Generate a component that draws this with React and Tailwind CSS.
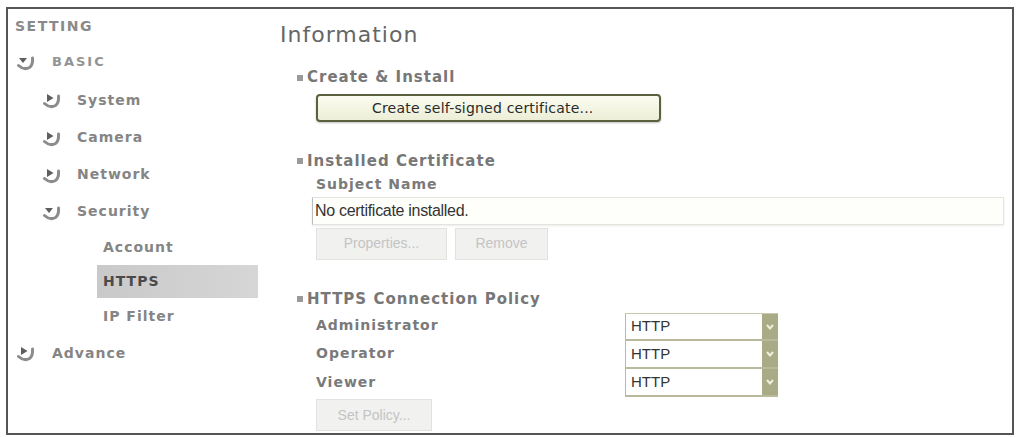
import React from 'react';

const verdana = { fontFamily: '"DejaVu Sans", Verdana, sans-serif' };
const arial = { fontFamily: '"Liberation Sans", Arial, sans-serif' };

function NavIcon({ open }) {
  return (
    <svg width="20" height="18" viewBox="0 0 20 18" className="shrink-0">
      <path d="M2.5 12.5 Q8 17.5 13.5 14.5 Q17 12 16.5 5" fill="none" stroke="#8c8c8c" strokeWidth="3" strokeLinecap="round" />
      {open ? (
        <polygon points="3,5 11,5 7,10" fill="#5e5e5e" />
      ) : (
        <polygon points="5,3 11.5,7 5,11" fill="#5e5e5e" />
      )}
    </svg>
  );
}

function SideItem({ icon, open, label, indent, h, active, small }) {
  return (
    <div className="flex items-center" style={{ height: h }}>
      {icon && (
        <div className={indent ? 'pl-[34px] pr-[15px]' : 'pl-[8px] pr-[16px]'}>
          <NavIcon open={open} />
        </div>
      )}
      {!icon && (
        <div
          className={`ml-[89px] flex items-center h-full w-[161px] pl-[6px] ${active ? 'bg-gradient-to-r from-[#c9c9c9] to-[#d6d6d6]' : ''}`}
        >
          <span className={`font-bold text-[14px] tracking-[1px] ${active ? 'text-[#4a4a4a]' : 'text-[#858585]'}`}>{label}</span>
        </div>
      )}
      {icon && (
        <span className={`font-bold ${small ? 'text-[13px] tracking-[2px] text-[#939393]' : 'text-[14px] tracking-[1px] text-[#858585]'}`}>{label}</span>
      )}
    </div>
  );
}

function Heading({ children }) {
  return (
    <div className="flex items-center pl-[27px]">
      <span className="w-[6px] h-[6px] bg-[#9a9a9a] mr-[4px]" />
      <span className="font-bold text-[15px] tracking-[1px] text-[#777]">{children}</span>
    </div>
  );
}

function Label({ children }) {
  return <span className="font-bold text-[14px] tracking-[1px] text-[#7a7a7a]">{children}</span>;
}

function GreyButton({ children, w }) {
  return (
    <div
      className="h-[32px] flex items-center justify-center bg-[#f1f1ef] border border-[#e2e2de] text-[#c4c4c4] text-[14px]"
      style={{ ...arial, width: w }}
    >
      {children}
    </div>
  );
}

function Select({ first }) {
  return (
    <div className={`flex h-[28px] w-[153px] bg-white border-b-2 border-l border-[#b9b99c] ${first ? 'border-t border-t-[#c8c8b0]' : ''}`}>
      <div className="flex-1 flex items-center pl-[5px] text-[15px] text-[#333]" style={arial}>HTTP</div>
      <div className="w-[16px] bg-[#a9ab86] flex items-center justify-center">
        <svg width="10" height="8" viewBox="0 0 10 8">
          <path d="M2 2 L5 5.5 L8 2" fill="none" stroke="#eef0dc" strokeWidth="2" />
        </svg>
      </div>
    </div>
  );
}

export default function App() {
  return (
    <div className="w-[1018px] h-[437px] bg-white pt-[7px] pl-[6px]" style={verdana}>
      <div className="w-[1008px] h-[428px] border-2 border-[#555] flex bg-white">
        {/* sidebar */}
        <div className="w-[262px] flex flex-col">
          <div className="h-[34px] flex items-center pl-[7px]">
            <span className="font-bold text-[14px] tracking-[1.5px] text-[#8a8a8a]">SETTING</span>
          </div>
          <SideItem icon open small label="BASIC" h={38} />
          <SideItem icon indent label="System" h={38} />
          <SideItem icon indent label="Camera" h={37} />
          <SideItem icon indent label="Network" h={37} />
          <SideItem icon indent open label="Security" h={37} />
          <SideItem label="Account" h={35} />
          <SideItem label="HTTPS" h={33} active />
          <SideItem label="IP Filter" h={37} />
          <SideItem icon label="Advance" h={36} />
        </div>

        {/* main */}
        <div className="flex-1 flex flex-col">
          <div className="h-[48px] flex items-center pl-[10px] pt-[2px]">
            <span className="text-[22px] tracking-[1px] text-[#666]">Information</span>
          </div>
          <div className="h-[37px] flex items-center pt-[4px]">
            <Heading>Create &amp; Install</Heading>
          </div>
          <div className="pl-[46px]">
            <div className="w-[345px] h-[28px] rounded-[4px] border-2 border-[#5c603c] bg-gradient-to-b from-[#fbfcf0] to-[#eceed6] flex items-center pl-[54px] text-[14px] tracking-[0.2px] text-[#2a2a2a] shadow-[0_1px_2px_rgba(0,0,0,0.25)]">
              Create self-signed certificate...
            </div>
          </div>
          <div className="h-[28px]" />
          <Heading>Installed Certificate</Heading>
          <div className="pl-[46px] h-[24px] flex items-center">
            <Label>Subject Name</Label>
          </div>
          <div className="pl-[42px] pr-[8px]">
            <div className="h-[28px] border border-[#e4e4dc] border-l-[#bcbcbc] bg-[#fefefb] flex items-center pl-[2px] text-[16px] tracking-[-0.3px] text-[#333] shadow-[0_1px_2px_rgba(0,0,0,0.08)]" style={arial}>
              No certificate installed.
            </div>
          </div>
          <div className="pl-[46px] pt-[3px] flex gap-[8px]">
            <GreyButton w={131}>Properties...</GreyButton>
            <GreyButton w={93}>Remove</GreyButton>
          </div>
          <div className="h-[28px]" />
          <Heading>HTTPS Connection Policy</Heading>
          <div className="flex pl-[46px] pt-[1px]">
            <div className="w-[309px] flex flex-col">
              <div className="h-[28px] flex items-center"><Label>Administrator</Label></div>
              <div className="h-[29px] flex items-center"><Label>Operator</Label></div>
              <div className="h-[29px] flex items-center"><Label>Viewer</Label></div>
            </div>
            <div className="flex flex-col pt-[2px]">
              <Select first />
              <Select />
              <Select />
            </div>
          </div>
          <div className="pl-[46px] pt-[2px]">
            <GreyButton w={116}>Set Policy...</GreyButton>
          </div>
        </div>
      </div>
    </div>
  );
}
